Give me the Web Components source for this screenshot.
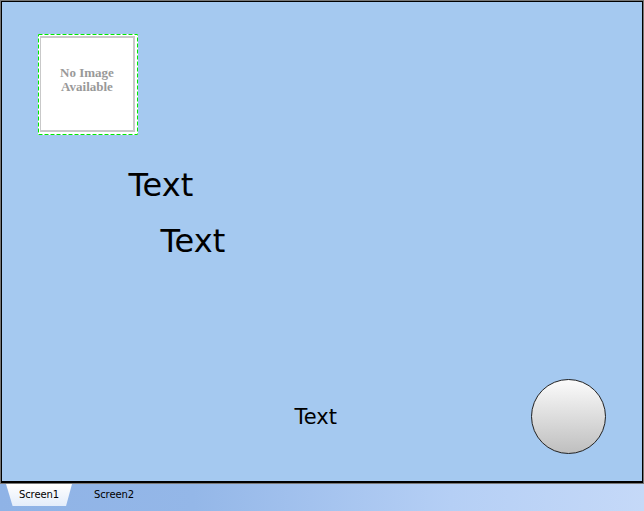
<!DOCTYPE html>
<html>
<head>
<meta charset="utf-8">
<style>
  html, body { margin: 0; height: 100%; }
  body { width: 644px; height: 511px; overflow: hidden; display: flex; flex-direction: column; font-family: "DejaVu Sans", sans-serif; }
</style>
</head>
<body>
<design-screen>
  <image-holder style="left:37px;top:33px"></image-holder>
  <canvas-text style="left:127.5px;top:165px;font-size:32px">Text</canvas-text>
  <canvas-text style="left:159.5px;top:221px;font-size:32px">Text</canvas-text>
  <canvas-text style="left:293.5px;top:404px;font-size:21px">Text</canvas-text>
  <round-button style="left:530px;top:378px"></round-button>
</design-screen>
<screen-tabs>
  <screen-tab active>Screen1</screen-tab>
  <screen-tab>Screen2</screen-tab>
</screen-tabs>
<script>
class DesignScreen extends HTMLElement {
  constructor() {
    super();
    this.attachShadow({ mode: "open" }).innerHTML = `
      <style>
        :host {
          display: block;
          position: relative;
          box-sizing: border-box;
          height: 484px;
          flex: none;
          background: #a5c9f0;
          border: 1px solid #777;
          box-shadow: inset 0 0 0 1px #000, inset 0 -2px 0 #000;
        }
      </style>
      <slot></slot>`;
  }
}

class ImageHolder extends HTMLElement {
  constructor() {
    super();
    this.attachShadow({ mode: "open" }).innerHTML = `
      <style>
        :host {
          position: absolute;
          box-sizing: border-box;
          width: 100px;
          height: 101px;
          padding: 2px 3px 3px 2px;
          background: #fff;
          display: flex;
        }
        svg { position: absolute; left: 0; top: 0; }
        div {
          flex: 1;
          box-sizing: border-box;
          border: 2px solid #c9c9c9;
          border-left-width: 1px;
          padding-bottom: 8px;
          display: flex;
          align-items: center;
          justify-content: center;
          text-align: center;
          color: #999;
          font: bold 13px/14px "Liberation Serif", serif;
        }
      </style>
      <svg width="100" height="101" viewBox="0 0 100 101">
        <rect x=".5" y=".5" width="99" height="100" fill="none" stroke="#00e800" stroke-dasharray="4 2"/>
      </svg>
      <div>No Image<br>Available</div>`;
  }
}

class CanvasText extends HTMLElement {
  constructor() {
    super();
    this.attachShadow({ mode: "open" }).innerHTML = `
      <style>
        :host { position: absolute; color: #000; line-height: 1.2; white-space: nowrap; }
      </style>
      <slot></slot>`;
  }
}

class RoundButton extends HTMLElement {
  constructor() {
    super();
    this.attachShadow({ mode: "open" }).innerHTML = `
      <style>
        :host {
          position: absolute;
          box-sizing: border-box;
          width: 75px;
          height: 75px;
          border-radius: 50%;
          border: 1px solid #222;
          background: linear-gradient(#fbfbfb, #bfbfbf);
        }
      </style>`;
  }
}

class ScreenTabs extends HTMLElement {
  constructor() {
    super();
    this.attachShadow({ mode: "open" }).innerHTML = `
      <style>
        :host {
          display: flex;
          flex: 1;
          padding-left: 6px;
          background: linear-gradient(90deg, #8fb3e6 0%, #94b7e8 30%, #b5cff5 70%, #c5d9f8 100%);
        }
      </style>
      <slot></slot>`;
  }
}

class ScreenTab extends HTMLElement {
  constructor() {
    super();
    this.attachShadow({ mode: "open" }).innerHTML = `
      <style>
        :host {
          display: flex;
          align-items: center;
          justify-content: center;
          box-sizing: border-box;
          width: 66px;
          height: 22px;
          padding-bottom: 2px;
          margin-right: 9px;
          font: 10px "DejaVu Sans", sans-serif;
          letter-spacing: -0.1px;
          color: #000;
        }
        :host([active]) {
          background: linear-gradient(#ffffff, #e4edfa);
          clip-path: polygon(0 0, 100% 0, 91% 100%, 10% 100%);
        }
      </style>
      <slot></slot>`;
  }
}

customElements.define("design-screen", DesignScreen);
customElements.define("image-holder", ImageHolder);
customElements.define("canvas-text", CanvasText);
customElements.define("round-button", RoundButton);
customElements.define("screen-tabs", ScreenTabs);
customElements.define("screen-tab", ScreenTab);
</script>
</body>
</html>
